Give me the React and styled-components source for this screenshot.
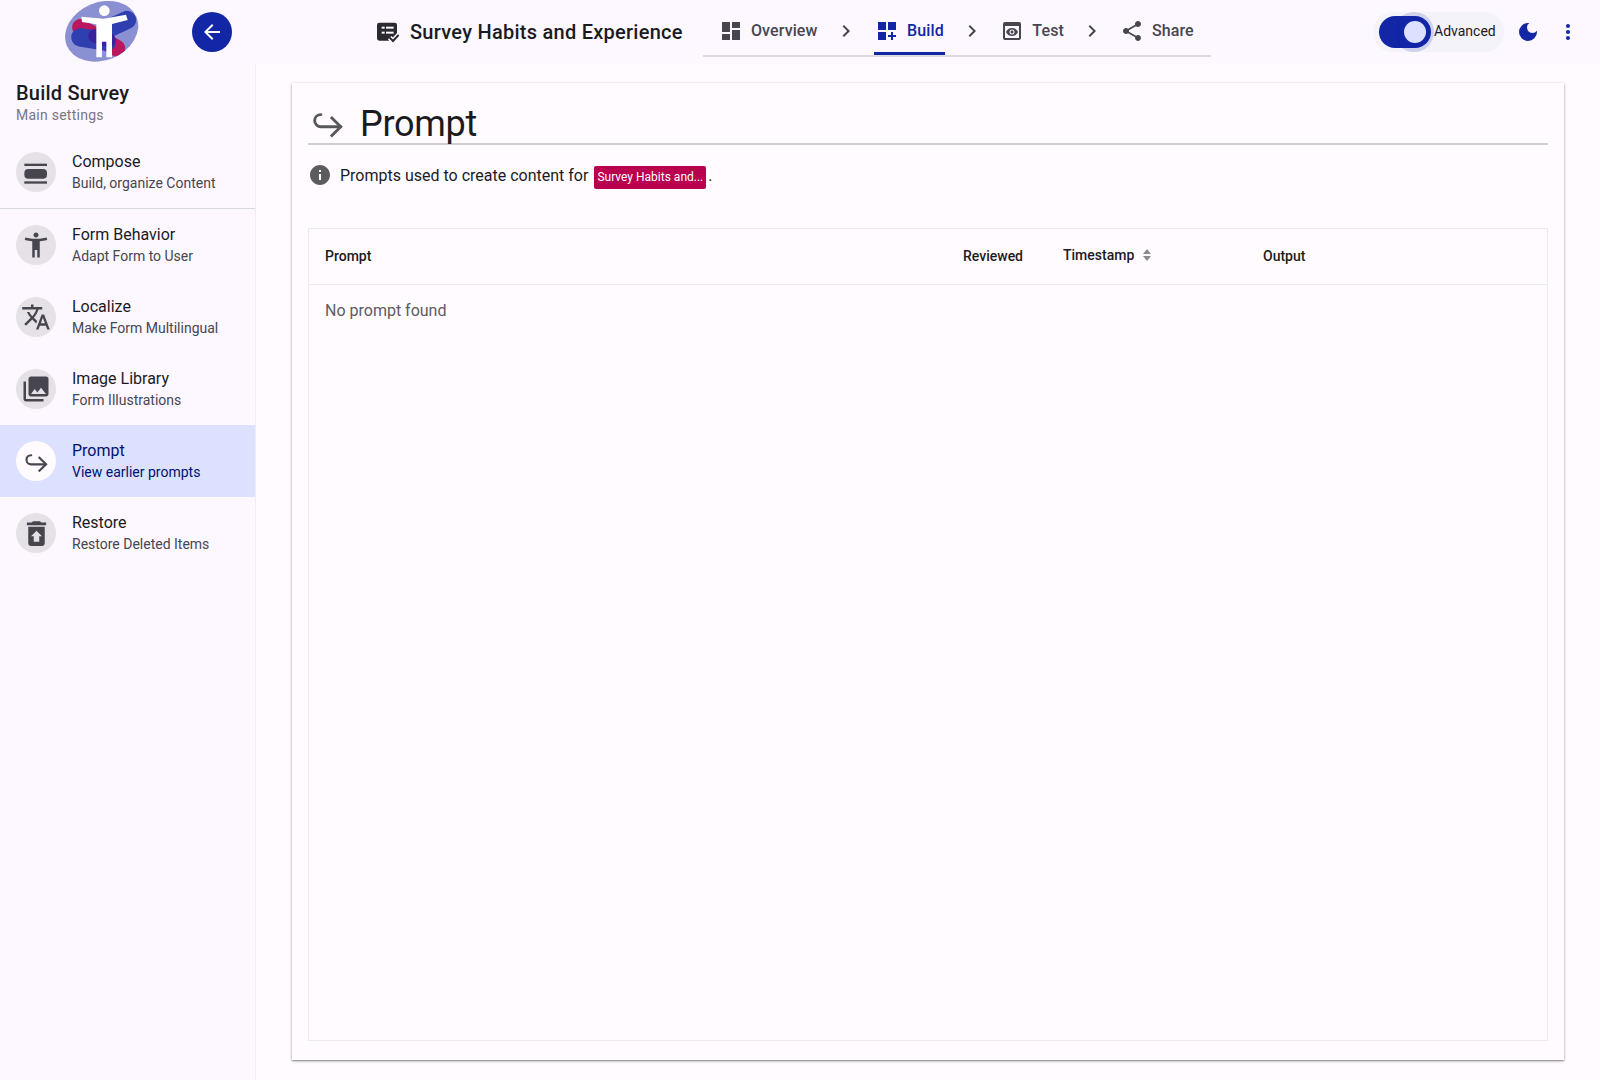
import React from 'react';
import styled, { createGlobalStyle } from 'styled-components';
import {
  MdArrowBack, MdDashboard, MdDashboardCustomize, MdPreview, MdShare, MdChevronRight,
  MdDarkMode, MdMoreVert, MdAccessibilityNew, MdTranslate, MdPhotoLibrary,
  MdRestoreFromTrash, MdInfo,
} from 'react-icons/md';

const Global = createGlobalStyle`
  html, body { margin: 0; padding: 0; background: #fffbff; }
  body { font-family: Roboto, "Liberation Sans", sans-serif; color: #1b1b1f; }
  * { box-sizing: border-box; }
`;

const Page = styled.div`
  width: 1600px;
  height: 1080px;
  overflow: hidden;
  display: flex;
  flex-direction: column;
  background: #fffbff;
`;

const Header = styled.header`
  height: 64px;
  flex: none;
  display: flex;
  align-items: center;
  background: #fdf7ff;
`;

const LogoSlot = styled.div`
  width: 192px;
  padding-left: 62px;
  height: 64px;
  display: flex;
  align-items: center;
  flex: none;
`;

const BackButton = styled.button`
  width: 40px;
  height: 40px;
  flex: none;
  border: 0;
  padding: 0;
  border-radius: 50%;
  background: #1226a6;
  color: #fff;
  display: flex;
  align-items: center;
  justify-content: center;
  font-size: 24px;
`;

const FormTitle = styled.div`
  margin-left: 145px;
  width: 326px;
  flex: none;
  display: flex;
  align-items: center;
  gap: 11px;
  font-size: 20px;
  font-weight: 500;
  letter-spacing: 0.26px;
  white-space: nowrap;
`;

const TabBar = styled.nav`
  width: 508px;
  height: 50px;
  align-self: flex-start;
  margin-top: 7px;
  flex: none;
  display: flex;
  align-items: flex-start;
  border-bottom: 2px solid #dcdbe0;
  padding-left: 15px;
`;

const Tab = styled.div`
  height: 48px;
  flex: none;
  display: flex;
  align-items: center;
  gap: 8px;
  padding: 2px 1px 0;
  font-size: 16px;
  font-weight: 500;
  letter-spacing: 0.1px;
  color: ${p => (p.$active ? '#1226a6' : '#47464f')};
  border-bottom: ${p => (p.$active ? '3px solid #1226a6' : '3px solid transparent')};
  svg { flex: none; font-size: 24px; }
`;

const Chevron = styled.div`
  width: ${p => p.$w}px;
  flex: none;
  height: 48px;
  display: flex;
  align-items: center;
  justify-content: center;
  color: #47464f;
  font-size: 24px;
`;

const AdvancedPill = styled.div`
  margin-left: 162px;
  width: 131px;
  height: 40px;
  flex: none;
  border-radius: 20px;
  background: #f4f3f9;
  display: flex;
  align-items: center;
  padding-left: 6px;
`;

const AdvancedLabel = styled.span`
  font-size: 14px;
  color: #1b1b1f;
  margin-bottom: 2px;
`;

const Track = styled.div`
  position: relative;
  width: 52px;
  height: 32px;
  flex: none;
  border-radius: 16px;
  background: #1226a6;
  margin-right: 3px;
`;

const Halo = styled.span`
  position: absolute;
  right: -3px;
  top: -4px;
  width: 40px;
  height: 40px;
  border-radius: 50%;
  background: rgba(18, 38, 166, 0.16);
`;

const Thumb = styled.span`
  position: absolute;
  right: 5px;
  top: 5px;
  width: 22px;
  height: 22px;
  border-radius: 50%;
  background: #dce1ff;
`;

const HeaderIcon = styled.div`
  margin-left: ${p => p.$ml}px;
  width: 24px;
  height: 24px;
  flex: none;
  color: #1226a6;
  font-size: 24px;
  display: flex;
`;

const Body = styled.div`
  flex: 1;
  min-height: 0;
  display: flex;
`;

const Sidebar = styled.aside`
  width: 256px;
  flex: none;
  background: #fdf7ff;
  border-right: 1px solid #f1ecf3;
  padding-top: 17px;
`;

const SideTitle = styled.div`
  padding-left: 16px;
  font-size: 20px;
  line-height: 24px;
  font-weight: 500;
  letter-spacing: 0.2px;
`;

const SideSub = styled.div`
  padding-left: 16px;
  font-size: 14px;
  line-height: 20px;
  color: #77767f;
  letter-spacing: 0.25px;
  margin-bottom: 11px;
`;

const Item = styled.div`
  height: 72px;
  display: flex;
  align-items: center;
  padding-left: 16px;
  gap: 16px;
  background: ${p => (p.$active ? '#dce1ff' : 'transparent')};
  color: ${p => (p.$active ? '#00116e' : '#1b1b1f')};
`;

const Divider = styled.div`
  height: 1px;
  background: #d5d8dc;
`;

const IconCircle = styled.div`
  width: 40px;
  height: 40px;
  flex: none;
  border-radius: 50%;
  background: ${p => (p.$active ? '#fffbff' : '#e5e1e6')};
  color: #47464f;
  display: flex;
  align-items: center;
  justify-content: center;
  font-size: 30px;
`;

const ItemTexts = styled.div`
  display: flex;
  flex-direction: column;
`;

const ItemTitle = styled.div`
  font-size: 16px;
  line-height: 24px;
`;

const ItemSub = styled.div`
  font-size: 14px;
  line-height: 18px;
  padding-bottom: 2px;
  color: ${p => (p.$active ? '#00116e' : '#47464f')};
`;

const Main = styled.main`
  flex: 1;
  min-width: 0;
  padding: 19px 36px 19px 36px;
  background: #fffbff;
`;

const Card = styled.section`
  height: 977px;
  background: #fffbff;
  padding: 16px 16px 19px;
  display: flex;
  flex-direction: column;
  box-shadow: 0 1px 3px 0 rgba(0, 0, 0, 0.3), 0 1px 1px 0 rgba(0, 0, 0, 0.22);
`;

const Heading = styled.h1`
  margin: 0;
  height: 46px;
  display: flex;
  align-items: center;
  gap: 14px;
  border-bottom: 2px solid #cfced3;
  font-size: 36px;
  font-weight: 400;
  letter-spacing: -0.3px;
  padding: 5px 0 0 2px;
  color: #1b1b1f;
  svg { color: #58585c; margin-top: -2px; }
`;

const Note = styled.div`
  margin-top: 18px;
  display: flex;
  align-items: center;
  height: 24px;
  font-size: 16px;
  color: #1b1b1f;
`;

const InfoSlot = styled.span`
  width: 32px;
  flex: none;
  display: flex;
  color: #5c5c60;
  font-size: 24px;
`;

const Chip = styled.span`
  margin: 4px 2px 0 6px;
  background: #b9004f;
  color: #fff;
  font-size: 12px;
  line-height: 22px;
  height: 23px;
  padding: 0 3px;
  border-radius: 2px;
`;

const Table = styled.div`
  margin-top: 41px;
  flex: 1;
  border: 1px solid #eeeaee;
`;

const TableHead = styled.div`
  height: 56px;
  padding-bottom: 2px;
  display: grid;
  grid-template-columns: 638px 100px 200px 1fr;
  align-items: center;
  border-bottom: 1px solid #eeeaee;
  font-size: 14px;
  font-weight: 500;
`;

const HeadCell = styled.div`
  padding-left: 16px;
  display: flex;
  align-items: center;
  gap: 9px;
  color: #1b1b1f;
  position: relative;
  top: ${p => (p.$raised ? '-1px' : '0')};
`;

const EmptyRow = styled.div`
  padding: 16px;
  font-size: 16px;
  line-height: 20px;
  color: #5d5c62;
`;

const ReplyIcon = ({ size = 24 }) => (
  <svg width={size} height={size} viewBox="0 0 24 24" fill="none" stroke="currentColor" strokeWidth="1.9" strokeLinecap="round" strokeLinejoin="miter">
    <path d="M7.300 6.400C4.700 6.400 3.100 8.300 3.100 10.400 3.100 12.600 5 14.500 7.300 14.500H20.300" />
    <path d="M14.600 8.700 20.500 14.500 14.600 20.300" strokeLinecap="square" />
  </svg>
);

const TitleIcon = () => (
  <svg width="22" height="22" viewBox="15 15 66 66">
    <rect x="15" y="20" width="60" height="54" rx="7" fill="#2b2a30" />
    <rect x="29" y="32" width="9" height="6" fill="#fdf7ff" />
    <rect x="42" y="32" width="23" height="6" fill="#fdf7ff" />
    <rect x="29" y="47" width="9" height="6" fill="#fdf7ff" />
    <rect x="42" y="47" width="23" height="6" fill="#fdf7ff" />
    <path d="M53 65 63 75 80 57" fill="none" stroke="#fdf7ff" strokeWidth="15" />
    <path d="M53 65 63 75 80 57" fill="none" stroke="#2b2a30" strokeWidth="6" />
  </svg>
);

const ComposeIcon = () => (
  <svg width="40" height="40" viewBox="0 0 120 120" fill="currentColor">
    <rect x="25" y="35" width="68" height="7" />
    <rect x="25" y="51" width="68" height="29" rx="12" />
    <rect x="25" y="88" width="68" height="7" />
  </svg>
);

const Logo = () => (
  <svg width="84" height="64" viewBox="0 0 252 192">
    <defs>
      <clipPath id="blob"><ellipse cx="119" cy="94" rx="113" ry="87" transform="rotate(-22 119 94)" /></clipPath>
    </defs>
    <ellipse cx="119" cy="94" rx="113" ry="87" transform="rotate(-22 119 94)" fill="#8b90d3" />
    <g clipPath="url(#blob)" fill="none" strokeLinecap="round">
      <path d="M55 82 165 145" stroke="#b9185f" strokeWidth="50" />
      <path d="M55 112 135 125" stroke="#2f3fb0" strokeWidth="55" />
      <path d="M140 85 195 60" stroke="#2f3fb0" strokeWidth="55" />
      <path d="M100 108 140 120" stroke="#3a209a" strokeWidth="42" />
    </g>
    <circle cx="127" cy="32" r="16" fill="#fff" />
    <path fill="#fff" d="M58 50 125 56 192 44 197 60 150 72V172H133V125H120V172H103V73L60 66z" />
  </svg>
);

const navItems = [
  { icon: <MdAccessibilityNew />, title: 'Form Behavior', sub: 'Adapt Form to User' },
  { icon: <MdTranslate />, title: 'Localize', sub: 'Make Form Multilingual' },
  { icon: <MdPhotoLibrary />, title: 'Image Library', sub: 'Form Illustrations' },
  { icon: <ReplyIcon size={27} />, title: 'Prompt', sub: 'View earlier prompts', active: true },
  { icon: <MdRestoreFromTrash size={33} />, title: 'Restore', sub: 'Restore Deleted Items' },
];

const NavItem = ({ icon, title, sub, active }) => (
  <Item $active={active}>
    <IconCircle $active={active}>{icon}</IconCircle>
    <ItemTexts>
      <ItemTitle>{title}</ItemTitle>
      <ItemSub $active={active}>{sub}</ItemSub>
    </ItemTexts>
  </Item>
);

const SortIcon = () => (
  <svg width="8" height="12" viewBox="0 0 8 12" fill="#8a898e">
    <path d="M4 0 8 5H0zM4 12 0 7h8z" />
  </svg>
);

export default function App() {
  return (
    <Page>
      <Global />
      <Header>
        <LogoSlot><Logo /></LogoSlot>
        <BackButton aria-label="Back"><MdArrowBack /></BackButton>
        <FormTitle><TitleIcon />Survey Habits and Experience</FormTitle>
        <TabBar>
          <Tab><MdDashboard />Overview</Tab>
          <Chevron $w={55.6}><MdChevronRight /></Chevron>
          <Tab $active><MdDashboardCustomize />Build</Tab>
          <Chevron $w={54.6}><MdChevronRight /></Chevron>
          <Tab><MdPreview />Test</Tab>
          <Chevron $w={54}><MdChevronRight /></Chevron>
          <Tab><MdShare />Share</Tab>
        </TabBar>
        <AdvancedPill>
          <Track><Halo /><Thumb /></Track>
          <AdvancedLabel>Advanced</AdvancedLabel>
        </AdvancedPill>
        <HeaderIcon $ml={12}><MdDarkMode /></HeaderIcon>
        <HeaderIcon $ml={16}><MdMoreVert /></HeaderIcon>
      </Header>
      <Body>
        <Sidebar>
          <SideTitle>Build Survey</SideTitle>
          <SideSub>Main settings</SideSub>
          <NavItem icon={<ComposeIcon />} title="Compose" sub="Build, organize Content" />
          <Divider />
          {navItems.map(it => <NavItem key={it.title} {...it} />)}
        </Sidebar>
        <Main>
          <Card>
            <Heading><ReplyIcon size={36} />Prompt</Heading>
            <Note>
              <InfoSlot><MdInfo /></InfoSlot>
              Prompts used to create content for
              <Chip>Survey Habits and...</Chip>.
            </Note>
            <Table>
              <TableHead>
                <HeadCell>Prompt</HeadCell>
                <HeadCell>Reviewed</HeadCell>
                <HeadCell $raised>Timestamp <SortIcon /></HeadCell>
                <HeadCell>Output</HeadCell>
              </TableHead>
              <EmptyRow>No prompt found</EmptyRow>
            </Table>
          </Card>
        </Main>
      </Body>
    </Page>
  );
}
